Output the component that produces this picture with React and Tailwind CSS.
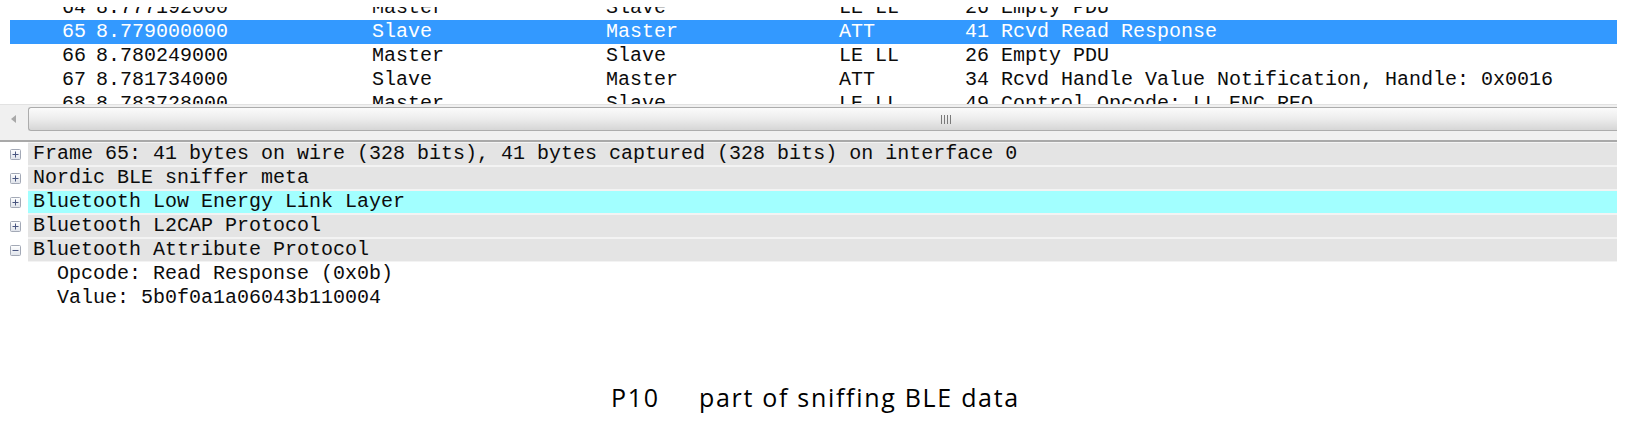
export default function App() {
  const first = { no: "64", time: "8.777192000", src: "Master", dst: "Slave", proto: "LE LL", info: "26 Empty PDU" };
  const rows = [
    { no: "65", time: "8.779000000", src: "Slave", dst: "Master", proto: "ATT", info: "41 Rcvd Read Response", sel: true },
    { no: "66", time: "8.780249000", src: "Master", dst: "Slave", proto: "LE LL", info: "26 Empty PDU" },
    { no: "67", time: "8.781734000", src: "Slave", dst: "Master", proto: "ATT", info: "34 Rcvd Handle Value Notification, Handle: 0x0016" },
    { no: "68", time: "8.783728000", src: "Master", dst: "Slave", proto: "LE LL", info: "49 Control Opcode: LL_ENC_REQ" },
  ];
  const tree = [
    { text: "Frame 65: 41 bytes on wire (328 bits), 41 bytes captured (328 bits) on interface 0", open: false },
    { text: "Nordic BLE sniffer meta", open: false },
    { text: "Bluetooth Low Energy Link Layer", open: false, hl: true },
    { text: "Bluetooth L2CAP Protocol", open: false },
    { text: "Bluetooth Attribute Protocol", open: true },
  ];
  const Cells = ({ r }) => (
    <>
      <span className="w-[34px]">{r.no}</span>
      <span className="w-[276px]">{r.time}</span>
      <span className="w-[234px]">{r.src}</span>
      <span className="w-[233px]">{r.dst}</span>
      <span className="w-[126px]">{r.proto}</span>
      <span>{r.info}</span>
    </>
  );
  const Box = ({ open }) => (
    <svg width="11" height="11" viewBox="0 0 11 11" className="block">
      <defs>
        <linearGradient id="bx" x1="0" y1="0" x2="0" y2="1">
          <stop offset="0" stopColor="#ffffff" />
          <stop offset="1" stopColor="#dfe3ea" />
        </linearGradient>
      </defs>
      <rect x="0.5" y="0.5" width="10" height="10" rx="1" fill="url(#bx)" stroke="#a3a9b6" />
      <line x1="2.5" y1="5.5" x2="8.5" y2="5.5" stroke="#4a5680" strokeWidth="1" />
      {!open && <line x1="5.5" y1="2.5" x2="5.5" y2="8.5" stroke="#4a5680" strokeWidth="1" />}
    </svg>
  );
  return (
    <div className="w-[1631px] h-[432px] bg-white overflow-hidden font-['Liberation_Mono',monospace] text-[20px] text-[#0c0c0c]">
      {/* packet list */}
      <div className="h-[104px] w-[1617px] overflow-hidden">
        {/* partially hidden top row */}
        <div className="h-[20px] flex flex-col">
          <div className="h-[7px]" />
          <div className="h-[13px] overflow-hidden">
            <div className="mt-[-11px] flex h-[24px] items-center ml-[10px] pl-[52px] whitespace-pre">
              <Cells r={first} />
            </div>
          </div>
        </div>
        {rows.map((r) => (
          <div
            key={r.no}
            className={r.sel ? "flex h-[24px] items-center ml-[10px] pl-[52px] whitespace-pre bg-[#3399ff] text-white" : "flex h-[24px] items-center ml-[10px] pl-[52px] whitespace-pre"}
          >
            <Cells r={r} />
          </div>
        ))}
      </div>
      {/* horizontal scrollbar */}
      <div className="w-[1617px] h-[38px] bg-[#f0f0f0] border-t border-[#e2e2e2] flex flex-col">
        <div className="flex items-start pt-[2px]">
          <div className="w-[28px] h-[24px] flex items-center justify-center">
            <svg width="6" height="8" viewBox="0 0 6 8">
              <path d="M5 0 L0 4 L5 8 Z" fill="#a8a8a8" />
            </svg>
          </div>
          <div className="relative flex-1 h-[24px] rounded-l-[3px] border border-r-0 border-[#acacac] bg-gradient-to-b from-[#fbfbfb] via-[#ececec] to-[#d6d6d6]">
            <div className="absolute left-[912px] top-[7px] flex gap-[2px]">
              <div className="w-[1px] h-[9px] bg-[#7a7a7a]" />
              <div className="w-[1px] h-[9px] bg-[#7a7a7a]" />
              <div className="w-[1px] h-[9px] bg-[#7a7a7a]" />
              <div className="w-[1px] h-[9px] bg-[#7a7a7a]" />
            </div>
          </div>
        </div>
        <div className="flex-1" />
        <div className="h-[2px] bg-[#a9a9a9]" />
      </div>
      {/* details tree */}
      <div className="w-[1617px]">
        {tree.map((t) => (
          <div key={t.text} className="flex h-[24px]">
            <div className="w-[28px] flex items-center pl-[10px]">
              <Box open={t.open} />
            </div>
            <div className="flex-1 py-[1px] bg-[#f3f3f3]">
              <div className={t.hl ? "h-[22px] bg-[#a2ffff] flex items-center pl-[5px] whitespace-pre" : "h-[22px] bg-[#e4e4e4] flex items-center pl-[5px] whitespace-pre"}>
                {t.text}
              </div>
            </div>
          </div>
        ))}
        <div className="h-[24px] flex items-center pl-[57px] whitespace-pre">Opcode: Read Response (0x0b)</div>
        <div className="h-[24px] flex items-center pl-[57px] whitespace-pre">Value: 5b0f0a1a06043b110004</div>
      </div>
      {/* caption */}
      <div className="mt-[75px] flex font-['Open_Sans',sans-serif] text-[25px] tracking-[1.7px] text-black leading-none whitespace-pre">
        <span className="ml-[611px] w-[88px]">P10</span>
        <span>part of sniffing BLE data</span>
      </div>
    </div>
  );
}
